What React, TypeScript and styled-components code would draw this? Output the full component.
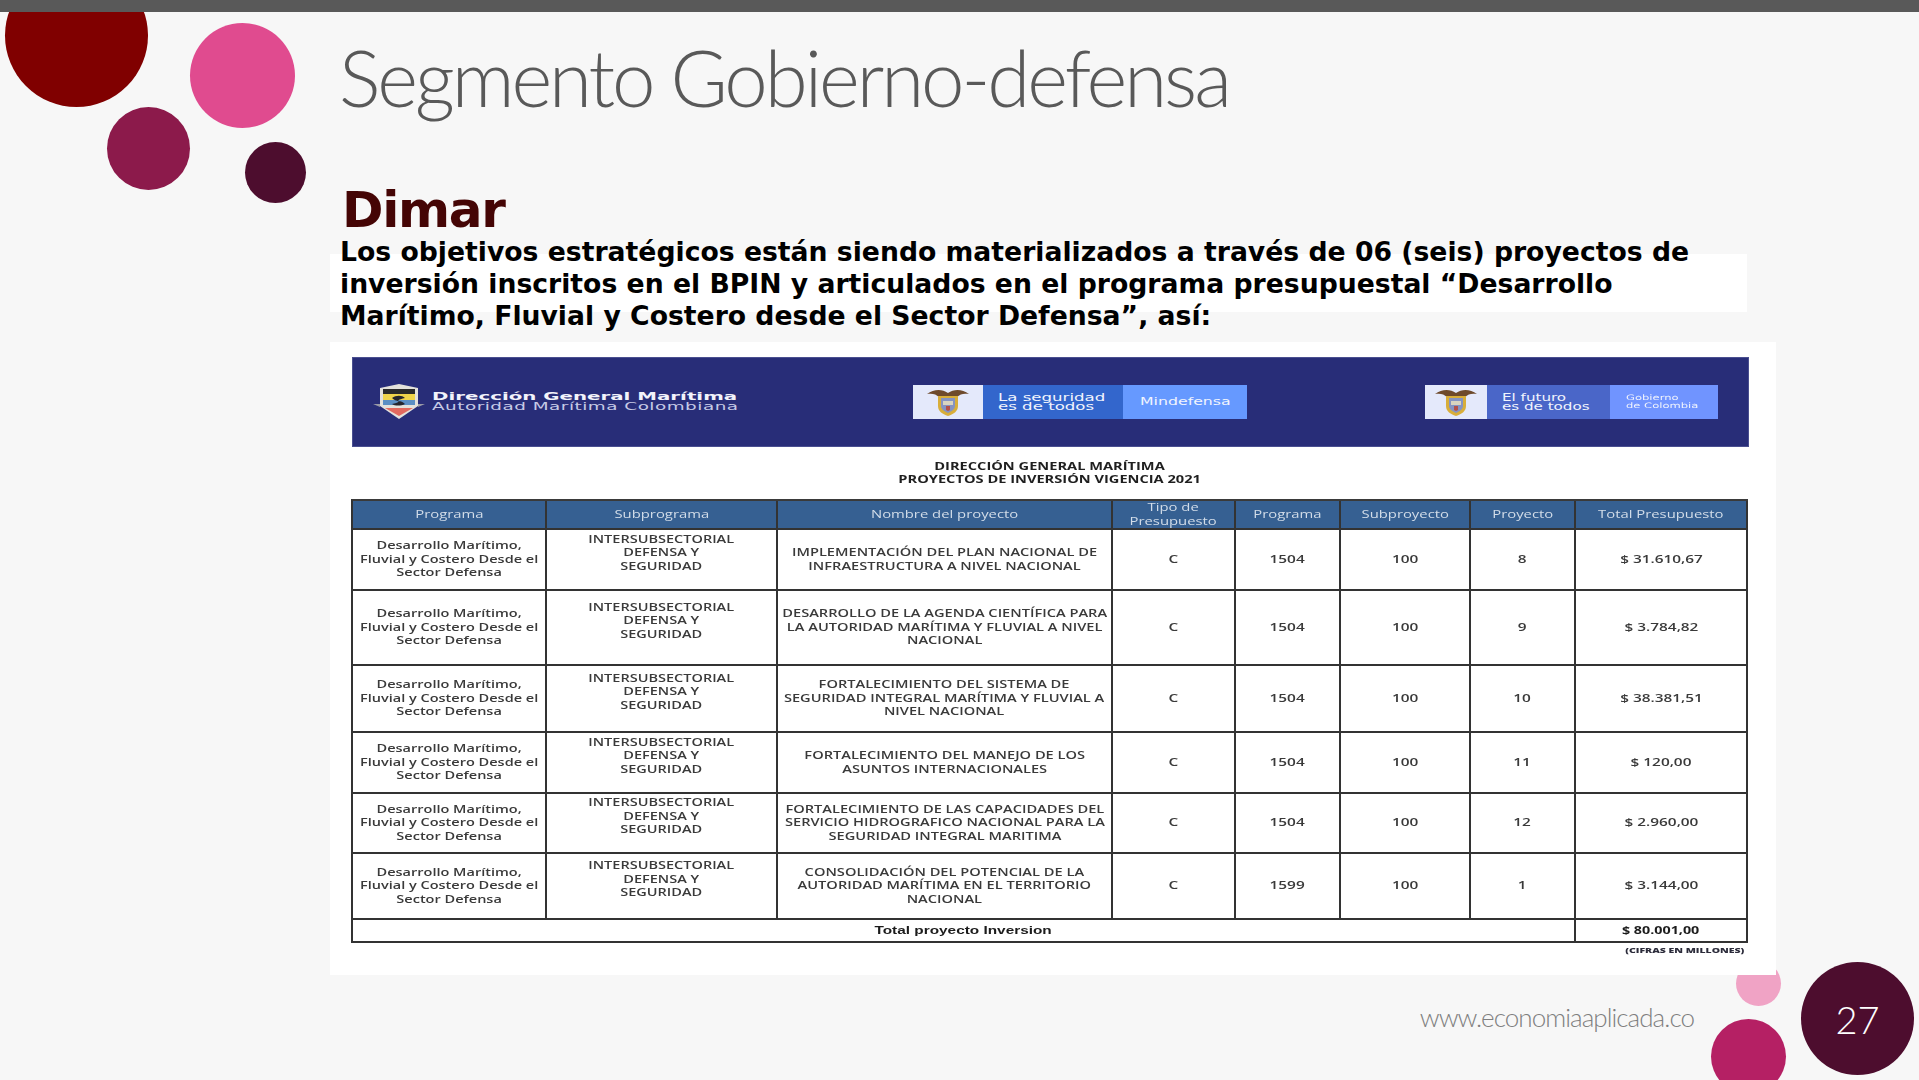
import React from 'react'
import styled, { createGlobalStyle } from 'styled-components'

const GlobalStyle = createGlobalStyle`
  html, body {
    margin: 0;
    padding: 0;
    background: #f7f7f7;
  }
`

const Slide = styled.div`
  position: relative;
  width: 1919px;
  height: 1080px;
  overflow: hidden;
  background: #f7f7f7;
  display: flex;
  flex-direction: column;
`

const TopBar = styled.div`
  height: 12px;
  flex: none;
  background: #595959;
  position: relative;
  z-index: 2;
`

const Dot = styled.div<{ $x: number; $y: number; $size: number; $color: string }>`
  position: absolute;
  left: ${p => p.$x}px;
  top: ${p => p.$y}px;
  width: ${p => p.$size}px;
  height: ${p => p.$size}px;
  border-radius: 50%;
  background: ${p => p.$color};
`

const Content = styled.main`
  position: relative;
  isolation: isolate;
  flex: 1;
  display: flex;
  flex-direction: column;
  padding-left: 340px;
`

const Title = styled.h1`
  margin: 0 0 0 -1px;
  height: 167px;
  font-family: 'Lato', sans-serif;
  font-weight: 300;
  font-size: 78px;
  line-height: 131px;
  letter-spacing: -3.05px;
  color: #595959;
  white-space: nowrap;
`

const Heading = styled.h2`
  margin: 0;
  height: 57px;
  padding-left: 2px;
  font-family: 'DejaVu Sans', sans-serif;
  font-weight: 700;
  font-size: 50px;
  line-height: 63px;
  letter-spacing: -1.3px;
  color: #450505;
`

const Lead = styled.p`
  position: relative;
  margin: 0;
  height: 106px;
  font-family: 'DejaVu Sans', sans-serif;
  font-weight: 700;
  font-size: 26.67px;
  line-height: 32px;
  color: #000;
  white-space: pre;

  &::before {
    content: '';
    position: absolute;
    z-index: -1;
    left: -10px;
    top: 18px;
    width: 1417px;
    height: 58px;
    background: #fff;
  }
`

const Card = styled.section`
  position: relative;
  box-sizing: border-box;
  margin-left: -10px;
  width: 1446px;
  height: 633px;
  padding: 15px 0 0 22px;
  background: #fff;
`

const Blurred = styled.div`
  filter: blur(0.5px);
`

const Banner = styled.header`
  box-sizing: border-box;
  width: 1397px;
  height: 90px;
  padding: 0 30px 0 20px;
  display: flex;
  align-items: center;
  justify-content: space-between;
  background: #282d78;
  border: 1px solid #4a4f90;
`

const Brand = styled.div`
  width: 361px;
  display: flex;
  align-items: center;
  gap: 7px;
`

const BrandLines = styled.div`
  display: flex;
  flex-direction: column;
  font-family: 'DejaVu Sans', sans-serif;
  white-space: nowrap;
`

const BrandName = styled.span`
  display: block;
  transform: scaleX(1.8);
  transform-origin: left center;
  font-size: 11px;
  line-height: 10px;
  font-weight: 700;
  color: #f2f3fb;
`

const BrandSub = styled(BrandName)`
  transform: scaleX(1.67);
  font-weight: 400;
  letter-spacing: 0.3px;
  color: #c6cae6;
`

const Badge = styled.div<{ $width: number }>`
  width: ${p => p.$width}px;
  height: 34px;
  display: flex;
  font-family: 'DejaVu Sans', sans-serif;
  color: #f1f4fd;
`

const Crest = styled.div<{ $width: number }>`
  width: ${p => p.$width}px;
  flex: none;
  display: flex;
  align-items: center;
  justify-content: center;
  background: #e4e9fb;
`

const BadgePart = styled.div<{ $width: number; $color: string; $pad: number }>`
  width: ${p => p.$width}px;
  flex: none;
  box-sizing: border-box;
  padding-left: ${p => p.$pad}px;
  display: flex;
  flex-direction: column;
  justify-content: center;
  background: ${p => p.$color};
`

const BadgeText = styled.span<{ $size?: number; $x?: number }>`
  display: block;
  transform: scaleX(${p => p.$x ?? 1.44});
  transform-origin: left center;
  font-size: ${p => p.$size ?? 10.5}px;
  line-height: ${p => (p.$size ? p.$size + 1 : 9.5)}px;
  font-weight: 400;
  white-space: nowrap;
`

const Caption = styled.div`
  height: 52px;
  display: flex;
  flex-direction: column;
  align-items: center;
  justify-content: center;
  width: 1396px;
`

const CaptionLine = styled.span`
  transform: scaleX(1.38);
  font-family: 'Open Sans', sans-serif;
  font-weight: 700;
  font-size: 10.6px;
  line-height: 13.5px;
  color: #1f1f1f;
  white-space: nowrap;
`

const Grid = styled.div`
  margin-left: -1px;
  width: 1397px;
  box-sizing: border-box;
  display: grid;
  grid-template-columns: 194px 231px 335px 123px 105px 130px 105px 172px;
  grid-template-rows: 29px 61px 75px 67px 61px 60px 66px 23px;
  border-top: 2px solid #3a3a3a;
  border-left: 2px solid #333;
`

const Cell = styled.div<{ $raised?: boolean; $span?: number }>`
  box-sizing: border-box;
  display: flex;
  align-items: center;
  justify-content: center;
  text-align: center;
  padding-bottom: ${p => (p.$raised ? 13 : 0)}px;
  grid-column: span ${p => p.$span ?? 1};
  border-right: 2px solid #333;
  border-bottom: 2px solid #333;
  font-family: 'Open Sans', sans-serif;
  font-weight: 600;
  font-size: 10.6px;
  line-height: 13.6px;
  color: #3a3a3a;
`

const HeadCell = styled(Cell)`
  background: #366092;
  color: #d3dde9;
  font-weight: 500;
`

const Stretched = styled.span<{ $x?: number }>`
  display: inline-block;
  white-space: pre;
  transform: scaleX(${p => p.$x ?? 1.37});
`

const TotalLabel = styled(Stretched)`
  font-family: 'Liberation Sans', sans-serif;
  font-weight: 700;
  color: #1c1c1c;
`

const TotalValue = styled(Stretched)`
  font-weight: 700;
  color: #1c1c1c;
`

const Note = styled.div`
  width: 1392px;
  text-align: right;
  font-family: 'Open Sans', sans-serif;
  font-weight: 800;
  font-size: 7.6px;
  line-height: 14px;
  color: #2b2b3a;
`

const NoteText = styled.span`
  display: inline-block;
  transform: scaleX(1.38);
  transform-origin: right center;
`

const Footer = styled.footer`
  flex: 1;
  display: flex;
  justify-content: flex-end;
  align-items: flex-start;
  padding: 25px 225px 0 0;
`

const Website = styled.span`
  font-family: 'Lato', sans-serif;
  font-weight: 300;
  font-size: 26px;
  line-height: 34px;
  letter-spacing: -0.95px;
  color: #7f7f7f;
`

const PageBadge = styled(Dot)`
  display: flex;
  align-items: center;
  justify-content: center;
  font-family: 'Lato', sans-serif;
  font-weight: 300;
  font-size: 38px;
  color: #fff;
`

const NUM_SCALE = 1.45

const rows = [
  ['IMPLEMENTACIÓN DEL PLAN NACIONAL DE\nINFRAESTRUCTURA A NIVEL NACIONAL', '1504', '8', '$ 31.610,67'],
  ['DESARROLLO DE LA AGENDA CIENTÍFICA PARA\nLA AUTORIDAD MARÍTIMA Y FLUVIAL A NIVEL\nNACIONAL', '1504', '9', '$ 3.784,82'],
  ['FORTALECIMIENTO DEL SISTEMA DE\nSEGURIDAD INTEGRAL MARÍTIMA Y FLUVIAL A\nNIVEL NACIONAL', '1504', '10', '$ 38.381,51'],
  ['FORTALECIMIENTO DEL MANEJO DE LOS\nASUNTOS INTERNACIONALES', '1504', '11', '$ 120,00'],
  ['FORTALECIMIENTO DE LAS CAPACIDADES DEL\nSERVICIO HIDROGRAFICO NACIONAL PARA LA\nSEGURIDAD INTEGRAL MARITIMA', '1504', '12', '$ 2.960,00'],
  ['CONSOLIDACIÓN DEL POTENCIAL DE LA\nAUTORIDAD MARÍTIMA EN EL TERRITORIO\nNACIONAL', '1599', '1', '$ 3.144,00'],
]

const headers = ['Programa', 'Subprograma', 'Nombre del proyecto', 'Tipo de\nPresupuesto', 'Programa', 'Subproyecto', 'Proyecto', 'Total Presupuesto']

function CoatOfArms() {
  return (
    <svg width="42" height="28" viewBox="0 0 42 28">
      <path d="M21 5C15 1 7 1 0 6c5-1 9 0 12 3 3-1 6-1 9-1s6 0 9 1c3-3 7-4 12-3-7-5-15-5-21-1z" fill="#6e4a2c" />
      <path d="M11 8h20v10c0 5-4 8-10 10-6-2-10-5-10-10z" fill="#d8ae3a" />
      <path d="M14 10h14v8c0 3-3 5-7 7-4-2-7-4-7-7z" fill="#8593c2" />
      <rect x="16" y="13" width="10" height="4" fill="#d9d4c0" />
      <path d="M19 18h4v4l-2 1-2-1z" fill="#b3504a" />
    </svg>
  )
}

function DimarShield() {
  return (
    <svg width="52" height="36" viewBox="0 0 52 36">
      <path d="M26 0 45 4v18L26 35 7 22V4z" fill="#e4e2dc" />
      <path d="M10 5h32v5H10z" fill="#2b2b2b" />
      <path d="M10 10h32v6H10z" fill="#f0d44a" />
      <path d="M10 16h32v5H10z" fill="#5b8fc4" />
      <path d="M12 24h28L26 32z" fill="#e2695f" />
      <path d="M19 14c4-3 10-3 13 0-3 1-6 1-7 3 3 0 5 1 7 3-4 2-10 2-13 0 3-1 6-1 7-3-3 0-5-1-7-3z" fill="#26262e" />
      <path d="M0 20h7v3zM52 20h-7v3z" fill="#9a9aa6" />
    </svg>
  )
}

export default function App() {
  return (
    <>
      <GlobalStyle />
      <Slide>
        <TopBar />
        <Dot $x={5} $y={-36} $size={143} $color="#800000" />
        <Dot $x={190} $y={23} $size={105} $color="#e04b8f" />
        <Dot $x={107} $y={107} $size={83} $color="#8c1a4b" />
        <Dot $x={245} $y={142} $size={61} $color="#4d0d2e" />
        <Dot $x={1736} $y={961} $size={45} $color="#f0a3c5" />
        <Dot $x={1711} $y={1019} $size={75} $color="#b52064" />
        <PageBadge $x={1801} $y={962} $size={113} $color="#4d0d2e">27</PageBadge>
        <Content>
          <Title>Segmento Gobierno-defensa</Title>
          <Heading>Dimar</Heading>
          <Lead>
            {'Los objetivos estratégicos están siendo materializados a través de 06 (seis) proyectos de\ninversión inscritos en el BPIN y articulados en el programa presupuestal “Desarrollo\nMarítimo, Fluvial y Costero desde el Sector Defensa”, así:'}
          </Lead>
          <Card>
            <Blurred>
              <Banner>
                <Brand>
                  <DimarShield />
                  <BrandLines>
                    <BrandName>Dirección General Marítima</BrandName>
                    <BrandSub>Autoridad Marítima Colombiana</BrandSub>
                  </BrandLines>
                </Brand>
                <Badge $width={334}>
                  <Crest $width={70}><CoatOfArms /></Crest>
                  <BadgePart $width={140} $color="#3366cc" $pad={15}>
                    <BadgeText $x={1.58}>La seguridad</BadgeText>
                    <BadgeText $x={1.58}>es de todos</BadgeText>
                  </BadgePart>
                  <BadgePart $width={124} $color="#6699ff" $pad={17}>
                    <BadgeText $x={1.5}>Mindefensa</BadgeText>
                  </BadgePart>
                </Badge>
                <Badge $width={293}>
                  <Crest $width={62}><CoatOfArms /></Crest>
                  <BadgePart $width={123} $color="#4a66c8" $pad={15}>
                    <BadgeText>El futuro</BadgeText>
                    <BadgeText>es de todos</BadgeText>
                  </BadgePart>
                  <BadgePart $width={108} $color="#7094ff" $pad={16}>
                    <BadgeText $size={7.5} $x={1.54}>Gobierno</BadgeText>
                    <BadgeText $size={7.5} $x={1.54}>de Colombia</BadgeText>
                  </BadgePart>
                </Badge>
              </Banner>
              <Caption>
                <CaptionLine>DIRECCIÓN GENERAL MARÍTIMA</CaptionLine>
                <CaptionLine>PROYECTOS DE INVERSIÓN VIGENCIA 2021</CaptionLine>
              </Caption>
              <Grid>
                {headers.map((h, i) => (
                  <HeadCell key={i}><Stretched $x={1.4}>{h}</Stretched></HeadCell>
                ))}
                {rows.map(([name, code, project, total]) => (
                  <React.Fragment key={project}>
                    <Cell><Stretched>{'Desarrollo Marítimo,\nFluvial y Costero Desde el\nSector Defensa'}</Stretched></Cell>
                    <Cell $raised><Stretched>{'INTERSUBSECTORIAL\nDEFENSA Y\nSEGURIDAD'}</Stretched></Cell>
                    <Cell><Stretched $x={1.38}>{name}</Stretched></Cell>
                    <Cell><Stretched $x={NUM_SCALE}>C</Stretched></Cell>
                    <Cell><Stretched $x={NUM_SCALE}>{code}</Stretched></Cell>
                    <Cell><Stretched $x={NUM_SCALE}>100</Stretched></Cell>
                    <Cell><Stretched $x={NUM_SCALE}>{project}</Stretched></Cell>
                    <Cell><Stretched $x={NUM_SCALE}>{total}</Stretched></Cell>
                  </React.Fragment>
                ))}
                <Cell $span={7}><TotalLabel $x={1.45}>Total proyecto Inversion</TotalLabel></Cell>
                <Cell><TotalValue $x={1.35}>$ 80.001,00</TotalValue></Cell>
              </Grid>
              <Note><NoteText>(CIFRAS EN MILLONES)</NoteText></Note>
            </Blurred>
          </Card>
          <Footer>
            <Website>www.economiaaplicada.co</Website>
          </Footer>
        </Content>
      </Slide>
    </>
  )
}
